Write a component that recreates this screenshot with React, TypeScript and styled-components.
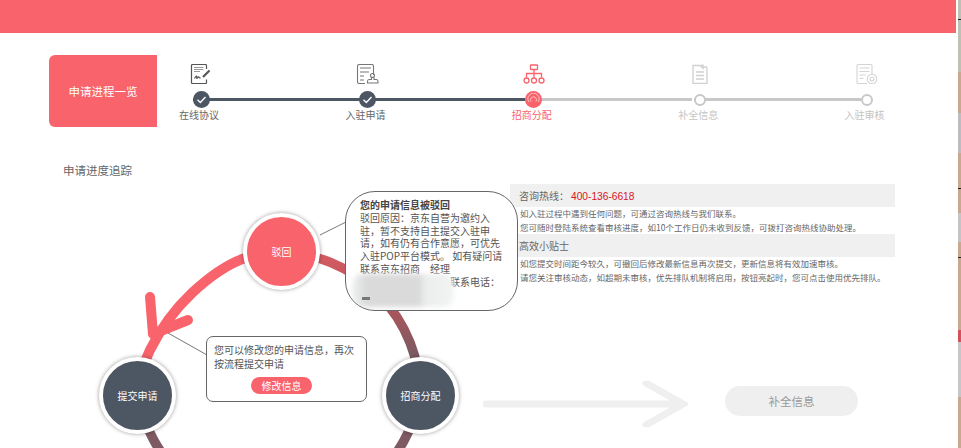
import React from 'react';
import styled, { createGlobalStyle } from 'styled-components';

const RED = '#f9636b';
const DARK = '#4d5663';
const MUTED = '#c8c8c8';

type StepState = 'done' | 'active' | 'todo';

const ContractIcon = () => (
  <svg width="24" height="20" viewBox="0 0 24 20" fill="none" stroke="#555" strokeWidth="1.2">
    <path d="M17.5 5V1.5a1 1 0 0 0-1-1H3.5a1 1 0 0 0-1 1v17a1 1 0 0 0 1 1h13a1 1 0 0 0 1-1v-3" />
    <path d="M5 3.5h9.5M5 5.5h9.5M5 7.5h6" stroke="#999" />
    <path d="M5.5 14.5c1-2 2-3 2.2-2s-.4 2.5.5 1.6 1-1.8 1.6-1 .7 1 1.7.6" />
    <path d="M14 13l6.5-6.5" strokeWidth="2.2" />
  </svg>
);

const FormIcon = () => (
  <svg width="24" height="20" viewBox="0 0 24 20" fill="none" stroke="#777" strokeWidth="1.1">
    <path d="M10 19.5H4a1.5 1.5 0 0 1-1.5-1.5V2A1.5 1.5 0 0 1 4 .5h13A1.5 1.5 0 0 1 18.5 2v9" />
    <path d="M5 4h11M5 8h9M5 12h4M5 16h4" />
    <circle cx="17.5" cy="11.5" r="2" />
    <path d="M16.5 13.5v2h-2.500c-1 0-1.500 1-1.500 2v1.500h10.500v-1.500c0-1-.5-2-1.500-2h-2.500v-2" />
  </svg>
);

const OrgIcon = () => (
  <svg width="24" height="20" viewBox="0 0 24 20" fill="none" stroke={RED} strokeWidth="1.3">
    <rect x="8.500" y="1" width="7" height="4.500" rx=".5" />
    <path d="M12 5.500v8M4.500 13.500V9.500h15v4" />
    <circle cx="4.500" cy="16.500" r="2.500" />
    <circle cx="12" cy="16.500" r="2.500" />
    <circle cx="19.500" cy="16.500" r="2.500" />
  </svg>
);

const AddDocIcon = () => (
  <svg width="24" height="20" viewBox="0 0 24 20" fill="none" stroke="#d0d0d0" strokeWidth="1.3">
    <path d="M15 1.500H5v18h14V3.500" />
    <path d="M8 8h8M8 11.500h8M8 15h8M15 .5v5M12.500 3h6.500" />
  </svg>
);

const ReviewIcon = () => (
  <svg width="24" height="20" viewBox="0 0 24 20" fill="none" stroke="#d4d4d4" strokeWidth="1.1">
    <path d="M12 19.500H3.500A1.500 1.500 0 0 1 2 18V2A1.500 1.500 0 0 1 3.500.5h12A1.500 1.500 0 0 1 17 2v8" />
    <path d="M4.500 4h10M4.500 7.500h10M4.500 11h6M4.500 14.500h4" />
    <circle cx="17" cy="15" r="4.800" />
    <circle cx="17" cy="15" r="2" />
  </svg>
);

const steps: { label: string; state: StepState; icon: React.ReactNode }[] = [
  { label: '在线协议', state: 'done', icon: <ContractIcon /> },
  { label: '入驻申请', state: 'done', icon: <FormIcon /> },
  { label: '招商分配', state: 'active', icon: <OrgIcon /> },
  { label: '补全信息', state: 'todo', icon: <AddDocIcon /> },
  { label: '入驻审核', state: 'todo', icon: <ReviewIcon /> },
];

const stripParts = [
  { height: 19, color: '#bcc1b2' },
  { height: 1, color: '#222' },
  { height: 52, color: '#bcc1b2' },
  { height: 41, color: '#c8a98f' },
  { height: 40, color: '#bdbcc0' },
  { height: 35, color: '#c8a98f' },
  { height: 1, color: '#222' },
  { height: 24, color: '#c8a98f' },
  { height: 29, color: '#c4c4c6' },
  { height: 15, color: '#c8a98f' },
  { height: 1, color: '#222' },
  { height: 72, color: '#c8a98f' },
  { height: 12, color: '#d4505c' },
  { height: 55, color: '#c6c6c8' },
  { height: 51, color: '#c8a98f' },
];

const App = () => {
  return (
    <Page>
      <GlobalStyle />
      <Main>
        <TopBar />
        <ProgressRow>
          <ProgressTitle>申请进程一览</ProgressTitle>
          <Steps>
            {steps.map((step, i) => (
              <Step key={step.label}>
                <StepIcon>{step.icon}</StepIcon>
                <NodeSlot>
                  {i < steps.length - 1 && <Rail $done={step.state === 'done'} />}
                  <StepNode $state={step.state}>
                    {step.state === 'done' && (
                      <svg width="11" height="11" viewBox="0 0 11 11" fill="none" stroke="#fff" strokeWidth="1.400">
                        <path d="M1.500 5.800l2.800 2.600 5.200-5.400" />
                      </svg>
                    )}
                    {step.state === 'active' && (
                      <svg width="13" height="13" viewBox="0 0 13 13" fill="none" stroke="#ffc4c6" strokeWidth="1">
                        <path d="M2 9a5.500 5.500 0 1 1 9 0" />
                        <path d="M4 8.500a3 3 0 1 1 5 0" />
                      </svg>
                    )}
                  </StepNode>
                </NodeSlot>
                <StepLabel $state={step.state}>{step.label}</StepLabel>
              </Step>
            ))}
          </Steps>
        </ProgressRow>

        <TrackTitle>申请进度追踪</TrackTitle>

        <TrackBody>
          <Diagram>
            <RingArt viewBox="0 179 483 269" width="483" height="269" fill="none">
              <defs>
                <linearGradient id="ringFade" gradientUnits="userSpaceOnUse" x1="0" y1="255" x2="0" y2="352">
                  <stop offset="0" stopColor="#d65a62" />
                  <stop offset="0.6" stopColor="#a8555c" />
                  <stop offset="1" stopColor="#7e5a62" />
                </linearGradient>
              </defs>
              <path d="M279 252A143 143 0 0 1 420 395" stroke="url(#ringFade)" strokeWidth="9.500" />
              <path d="M420 395A143 143 0 0 1 138 395" stroke="#7e5a62" strokeWidth="9.500" />
              <path
                d="M245 258C225 265 208 278 192 293C175 309 160 330 150 350C144 362 140 378 138 395"
                stroke={RED}
                strokeWidth="10"
              />
              <path d="M150 297L153 334L188 320" stroke={RED} strokeWidth="10" strokeLinecap="round" strokeLinejoin="round" />
              <path d="M320 235L346 222M168 333L207 355" stroke="#777" strokeWidth="1" />
            </RingArt>

            <RingNode $x={243} $y={34} $red>驳回</RingNode>
            <RingNode $x={99} $y={178}>提交申请</RingNode>
            <RingNode $x={382} $y={178}>招商分配</RingNode>

            <RejectBubble>
              <BubbleTitle>您的申请信息被驳回</BubbleTitle>
              驳回原因&#xFF1A;京东自营为邀约入驻&#xFF0C;暂不支持自主提交入驻申请&#xFF0C;如有仍有合作意愿&#xFF0C;可优先入驻POP平台模式。 如有疑问请联系京东招商
              <Redacted $width={10} />
              经理
              <br />
              <Redacted $width={90} />
              联系电话&#xFF1A;
              <Smudge />
              <SmudgeMark />
            </RejectBubble>

            <EditCallout>
              您可以修改您的申请信息&#xFF0C;再次按流程提交申请
              <EditButton>修改信息</EditButton>
            </EditCallout>
          </Diagram>

          <SideColumn>
            <InfoPanel>
              <InfoBar>
                咨询热线&#xFF1A;<Phone>400-136-6618</Phone>
              </InfoBar>
              <InfoNote>
                如入驻过程中遇到任何问题&#xFF0C;可通过咨询热线与我们联系。
                <br />
                您可随时登陆系统查看审核进度&#xFF0C;如10个工作日仍未收到反馈&#xFF0C;可拨打咨询热线协助处理。
              </InfoNote>
              <InfoBar>高效小贴士</InfoBar>
              <InfoNote>
                如您提交时间距今较久&#xFF0C;可撤回后修改最新信息再次提交&#xFF0C;更新信息将有效加速审核。
                <br />
                请您关注审核动态&#xFF0C;如超期未审核&#xFF0C;优先排队机制将启用&#xFF0C;按钮亮起时&#xFF0C;您可点击使用优先排队。
              </InfoNote>
            </InfoPanel>
            <NextRow>
              <svg width="205" height="46" viewBox="0 0 205 46" fill="none" stroke="#efefef" strokeWidth="7" strokeLinecap="round">
                <path d="M3 23H199M163 2L200 23L163 44" />
              </svg>
              <NextButton>补全信息</NextButton>
            </NextRow>
          </SideColumn>
        </TrackBody>
      </Main>
      <Strip>
        {stripParts.map((part, i) => (
          <StripPart key={i} $height={part.height} $color={part.color} />
        ))}
      </Strip>
    </Page>
  );
};

const GlobalStyle = createGlobalStyle`
  html, body {
    margin: 0;
    padding: 0;
    background: #fff;
  }
  body {
    font-family: "Noto Sans CJK SC", "Liberation Sans", sans-serif;
    color: #666;
  }
`;

const Page = styled.div`
  display: flex;
  width: 961px;
  height: 448px;
  overflow: hidden;
`;

const Main = styled.div`
  width: 956px;
  margin-right: 2px;
  flex: none;
`;

const Strip = styled.div`
  width: 3px;
  flex: none;
`;

const StripPart = styled.div<{ $height: number; $color: string }>`
  height: ${(p) => p.$height}px;
  background: ${(p) => p.$color};
`;

const TopBar = styled.div`
  height: 33px;
  background: ${RED};
`;

const ProgressRow = styled.div`
  display: flex;
  margin-top: 22px;
  padding-left: 49px;
`;

const ProgressTitle = styled.div`
  width: 108px;
  height: 72px;
  flex: none;
  display: flex;
  align-items: center;
  justify-content: center;
  background: ${RED};
  border-radius: 6px 0 0 6px;
  color: #fff;
  font-size: 11.5px;
`;

const Steps = styled.div`
  display: flex;
  gap: 78.4px;
`;

const Step = styled.div`
  width: 88px;
  flex: none;
  padding-top: 9px;
  display: flex;
  flex-direction: column;
  align-items: center;
`;

const StepIcon = styled.div`
  height: 20px;
  display: flex;
  justify-content: center;
  margin-bottom: 7px;
`;

const NodeSlot = styled.div`
  position: relative;
  height: 17px;
  display: flex;
  align-items: center;
  justify-content: center;
`;

const Rail = styled.div<{ $done: boolean }>`
  position: absolute;
  left: 0;
  top: 7px;
  width: 166.4px;
  height: 3px;
  background: ${(p) => (p.$done ? DARK : MUTED)};
`;

const StepNode = styled.div<{ $state: StepState }>`
  position: relative;
  box-sizing: border-box;
  display: flex;
  align-items: center;
  justify-content: center;
  border-radius: 50%;
  width: ${(p) => (p.$state === 'todo' ? 12 : 17)}px;
  height: ${(p) => (p.$state === 'todo' ? 12 : 17)}px;
  background: ${(p) => (p.$state === 'done' ? DARK : p.$state === 'active' ? RED : '#fff')};
  border: ${(p) => (p.$state === 'todo' ? `2px solid ${MUTED}` : 'none')};
`;

const StepLabel = styled.div<{ $state: StepState }>`
  margin-right: 4px;
  font-size: 10px;
  line-height: 14px;
  color: ${(p) => (p.$state === 'done' ? '#666' : p.$state === 'active' ? RED : '#c4c4c4')};
`;

const TrackTitle = styled.div`
  margin-top: 35px;
  padding-left: 63px;
  font-size: 11.5px;
  line-height: 17px;
`;

const TrackBody = styled.div`
  display: flex;
  height: 269px;
`;

const Diagram = styled.div`
  position: relative;
  width: 483px;
  flex: none;
  z-index: 1;
`;

const RingArt = styled.svg`
  position: absolute;
  left: 0;
  top: 0;
`;

const RingNode = styled.div<{ $x: number; $y: number; $red?: boolean }>`
  position: absolute;
  left: ${(p) => p.$x}px;
  top: ${(p) => p.$y}px;
  box-sizing: border-box;
  width: 77px;
  height: 77px;
  display: flex;
  align-items: center;
  justify-content: center;
  border: 4px solid #fff;
  border-radius: 50%;
  background: ${(p) => (p.$red ? RED : DARK)};
  box-shadow: 0 0 4px rgba(0, 0, 0, 0.4);
  color: #fff;
  font-size: 10px;
`;

const RejectBubble = styled.div`
  position: absolute;
  left: 345px;
  top: 12px;
  box-sizing: border-box;
  width: 173px;
  height: 120px;
  padding: 7px 14px 0;
  overflow: hidden;
  background: #fff;
  border: 1px solid #666;
  border-radius: 30px;
  color: #555;
  font-size: 10px;
  line-height: 12.8px;
`;

const BubbleTitle = styled.div`
  font-weight: 700;
  color: #444;
`;

const Redacted = styled.span<{ $width: number }>`
  display: inline-block;
  width: ${(p) => p.$width}px;
`;

const Smudge = styled.div`
  position: absolute;
  left: 6px;
  top: 82px;
  width: 102px;
  height: 33px;
  background: linear-gradient(90deg, #f0f2f2 0, #dadada 14%, #dadada 66%, #eceeee 72%, #f2f4f4 100%);
  border-radius: 10px;
  filter: blur(2.500px);
`;

const SmudgeMark = styled.div`
  position: absolute;
  left: 16px;
  top: 105px;
  width: 8px;
  height: 3px;
  background: #777;
  filter: blur(0.500px);
`;

const EditCallout = styled.div`
  position: absolute;
  left: 206px;
  top: 157px;
  box-sizing: border-box;
  width: 161px;
  height: 66px;
  padding: 6px 7px 0;
  display: flex;
  flex-direction: column;
  background: #fff;
  border: 1px solid #666;
  border-radius: 7px;
  color: #555;
  font-size: 10px;
  line-height: 14px;
`;

const EditButton = styled.button`
  align-self: center;
  width: 61px;
  height: 17px;
  margin: 6px 10px 0 0;
  padding: 0;
  border: none;
  border-radius: 9px;
  background: ${RED};
  color: #fff;
  font-family: inherit;
  font-size: 10px;
  line-height: 17px;
`;

const SideColumn = styled.div`
  flex: 1;
  position: relative;
`;

const InfoPanel = styled.div`
  width: 385px;
  margin: 5px 0 0 27px;
  white-space: nowrap;
`;

const InfoBar = styled.div`
  height: 23px;
  padding-left: 9px;
  background: #f0f0f0;
  font-size: 10px;
  line-height: 23px;
`;

const Phone = styled.span`
  margin-left: 2px;
  color: #d9161c;
  font-family: "Liberation Sans", sans-serif;
  font-size: 10.200px;
`;

const InfoNote = styled.div`
  padding-left: 10px;
  font-size: 8.500px;
  line-height: 13.500px;
`;

const NextRow = styled.div`
  display: flex;
  align-items: center;
  gap: 37px;
  margin-top: 97px;
`;

const NextButton = styled.div`
  width: 133px;
  height: 30px;
  margin-bottom: 6px;
  display: flex;
  align-items: center;
  justify-content: center;
  border-radius: 15px;
  background: #efefef;
  color: #999;
  font-size: 11.500px;
`;

export default App;
